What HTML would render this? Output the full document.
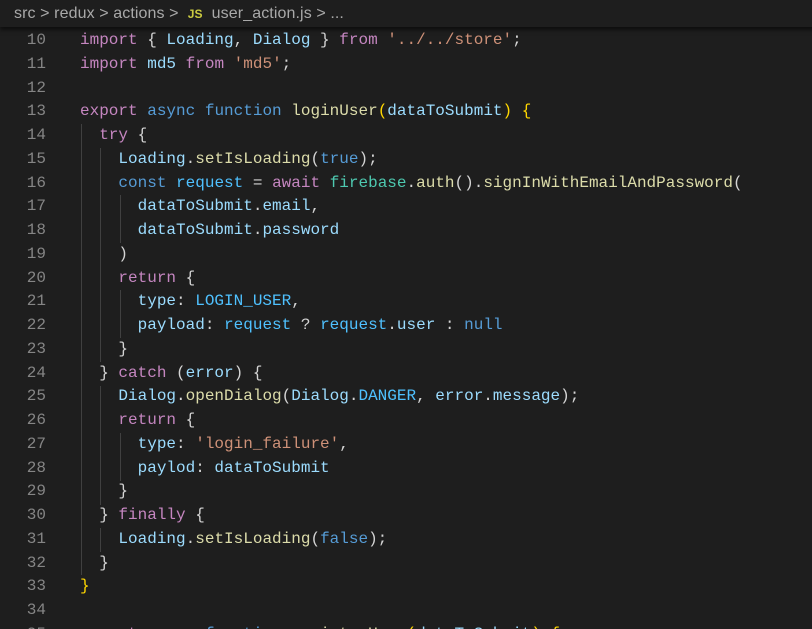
<!DOCTYPE html>
<html><head><meta charset="utf-8"><style>
html,body{margin:0;padding:0;background:#1e1e1e;width:812px;height:629px;overflow:hidden;position:relative}
.bc{position:absolute;left:0;top:0;width:812px;height:27px;background:#1e1e1e;box-shadow:0 3px 4px rgba(0,0,0,.55);font:16px "Liberation Sans",sans-serif;color:#a9a9a9;line-height:27px;padding-left:14px;z-index:2;white-space:pre;letter-spacing:0.1px}
.js{color:#cbcb41;font-weight:bold;font-size:12px}
.code{position:absolute;left:0;top:29px;font:16px/23.75px "Liberation Mono",monospace;white-space:pre;color:#d4d4d4}
.ln{position:absolute;left:0;width:46px;text-align:right;color:#858585}
.tx{position:absolute;left:80px}
.g{position:absolute;width:1px;background:#404040}
.k{color:#c586c0}.b{color:#569cd6}.f{color:#dcdcaa}.v{color:#9cdcfe}.s{color:#ce9178}.c{color:#4fc1ff}.t{color:#4ec9b0}.y{color:#ffd700}
</style></head><body>
<div class="bc">src &gt; redux &gt; actions &gt;  <span class="js">JS</span>  user_action.js &gt; ...</div>
<div class="g" style="left:81px;top:124px;height:451px"></div>
<div class="g" style="left:100px;top:148px;height:214px"></div>
<div class="g" style="left:100px;top:386px;height:119px"></div>
<div class="g" style="left:100px;top:528px;height:24px"></div>
<div class="g" style="left:120px;top:195px;height:48px"></div>
<div class="g" style="left:120px;top:290px;height:48px"></div>
<div class="g" style="left:120px;top:433px;height:48px"></div>
<div class="code">
<div class="ln" style="top:0">10</div><div class="tx" style="top:0"><span class="k">import</span> { <span class="v">Loading</span>, <span class="v">Dialog</span> } <span class="k">from</span> <span class="s">'../../store'</span>;</div>
<div class="ln" style="top:23.75px">11</div><div class="tx" style="top:23.75px"><span class="k">import</span> <span class="v">md5</span> <span class="k">from</span> <span class="s">'md5'</span>;</div>
<div class="ln" style="top:47.5px">12</div>
<div class="ln" style="top:71.25px">13</div><div class="tx" style="top:71.25px"><span class="k">export</span> <span class="b">async</span> <span class="b">function</span> <span class="f">loginUser</span><span class="y">(</span><span class="v">dataToSubmit</span><span class="y">)</span> <span class="y">{</span></div>
<div class="ln" style="top:95px">14</div><div class="tx" style="top:95px">  <span class="k">try</span> {</div>
<div class="ln" style="top:118.75px">15</div><div class="tx" style="top:118.75px">    <span class="v">Loading</span>.<span class="f">setIsLoading</span>(<span class="b">true</span>);</div>
<div class="ln" style="top:142.5px">16</div><div class="tx" style="top:142.5px">    <span class="b">const</span> <span class="c">request</span> = <span class="k">await</span> <span class="t">firebase</span>.<span class="f">auth</span>().<span class="f">signInWithEmailAndPassword</span>(</div>
<div class="ln" style="top:166.25px">17</div><div class="tx" style="top:166.25px">      <span class="v">dataToSubmit</span>.<span class="v">email</span>,</div>
<div class="ln" style="top:190px">18</div><div class="tx" style="top:190px">      <span class="v">dataToSubmit</span>.<span class="v">password</span></div>
<div class="ln" style="top:213.75px">19</div><div class="tx" style="top:213.75px">    )</div>
<div class="ln" style="top:237.5px">20</div><div class="tx" style="top:237.5px">    <span class="k">return</span> {</div>
<div class="ln" style="top:261.25px">21</div><div class="tx" style="top:261.25px">      <span class="v">type</span>: <span class="c">LOGIN_USER</span>,</div>
<div class="ln" style="top:285px">22</div><div class="tx" style="top:285px">      <span class="v">payload</span>: <span class="c">request</span> ? <span class="c">request</span>.<span class="v">user</span> : <span class="b">null</span></div>
<div class="ln" style="top:308.75px">23</div><div class="tx" style="top:308.75px">    }</div>
<div class="ln" style="top:332.5px">24</div><div class="tx" style="top:332.5px">  } <span class="k">catch</span> (<span class="v">error</span>) {</div>
<div class="ln" style="top:356.25px">25</div><div class="tx" style="top:356.25px">    <span class="v">Dialog</span>.<span class="f">openDialog</span>(<span class="v">Dialog</span>.<span class="c">DANGER</span>, <span class="v">error</span>.<span class="v">message</span>);</div>
<div class="ln" style="top:380px">26</div><div class="tx" style="top:380px">    <span class="k">return</span> {</div>
<div class="ln" style="top:403.75px">27</div><div class="tx" style="top:403.75px">      <span class="v">type</span>: <span class="s">'login_failure'</span>,</div>
<div class="ln" style="top:427.5px">28</div><div class="tx" style="top:427.5px">      <span class="v">paylod</span>: <span class="v">dataToSubmit</span></div>
<div class="ln" style="top:451.25px">29</div><div class="tx" style="top:451.25px">    }</div>
<div class="ln" style="top:475px">30</div><div class="tx" style="top:475px">  } <span class="k">finally</span> {</div>
<div class="ln" style="top:498.75px">31</div><div class="tx" style="top:498.75px">    <span class="v">Loading</span>.<span class="f">setIsLoading</span>(<span class="b">false</span>);</div>
<div class="ln" style="top:522.5px">32</div><div class="tx" style="top:522.5px">  }</div>
<div class="ln" style="top:546.25px">33</div><div class="tx" style="top:546.25px"><span class="y">}</span></div>
<div class="ln" style="top:570px">34</div>
<div class="ln" style="top:593.75px">35</div><div class="tx" style="top:593.75px"><span class="k">export</span> <span class="b">async</span> <span class="b">function</span> <span class="f">registerUser</span><span class="y">(</span><span class="v">dataToSubmit</span><span class="y">)</span> <span class="y">{</span></div>
</div>
</body></html>
